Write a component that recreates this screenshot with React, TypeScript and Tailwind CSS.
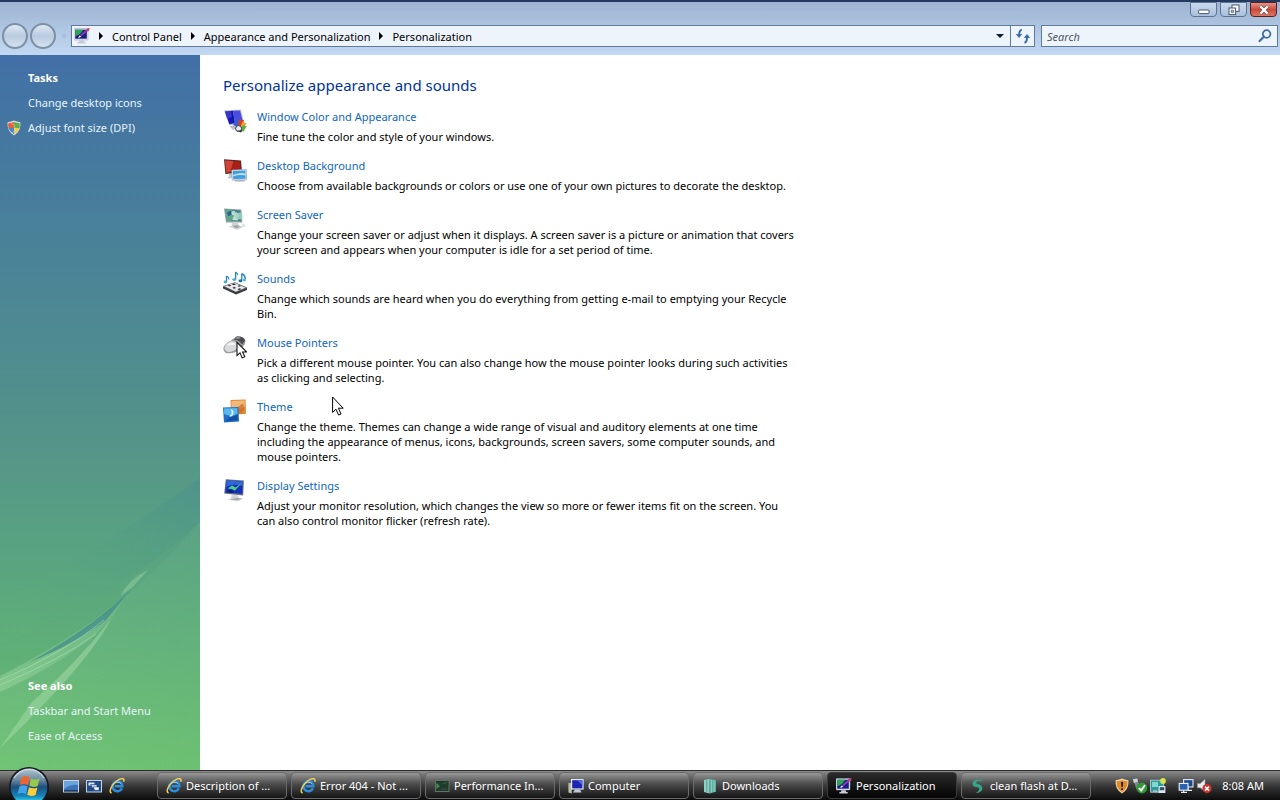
import React, { useState } from "react";

/* ── Icons ── */

function MonitorIcon({ className = "" }: { className?: string }) {
  return (
    <svg viewBox="0 0 16 16" className={className} aria-hidden="true">
      <rect x="0" y="0.5" width="14" height="11.5" rx="0.8" fill="#e6ebf2" stroke="#8f9bb0" strokeWidth="0.5" />
      <rect x="1.2" y="1.7" width="11.6" height="9" fill="#1d1c86" />
      <path d="M1.2 1.7H9.4L6 6 1.2 8.6Z" fill="#2fa452" />
      <path d="M5 9.5 7 6 13.5 0.6 15.4 0.3 14.8 2.2 8.4 7.6Z" fill="#7a3fb5" />
      <path d="M12.4 1.2 15.6 0 15 2.8 13.6 3.6Z" fill="#e0405a" />
      <path d="M4.2 10 5.2 7.4 7.4 8.8Z" fill="#fff" />
      <path d="M5.5 12.2h4l.8 1.8h1.4v1.6H3.4V14h1.4Z" fill="#c6cbd6" />
    </svg>
  );
}

function WindowColorIcon() {
  return (
    <svg viewBox="0 0 24 24" className="h-6 w-6" aria-hidden="true">
      <path d="M1 1.4 18 .6l3 13-14.6 3Z" fill="#b9c2e2" />
      <path d="M2 2.4l8-.6L12 14l-5.6 1.2Z" fill="#1717b4" />
      <path d="M10 1.8 17 1.4l2.8 11.2L12 14Z" fill="#4a4de0" />
      <path d="M2 2.4l6-.5 1 6-5 2Z" fill="#4444cf" opacity="0.7" />
      <path d="M6.5 17.5 12 16l2 4-4 .8Z" fill="#b9bcc6" />
      <path d="M10 15.5 14 9l4.5 1.6-4 8Z" fill="#3a5fd8" />
      <path d="M14.5 18.6 16 10.6 21 11l-2.5 7Z" fill="#d43b2a" />
      <path d="M17 18.8 19.6 12.4 23.4 14.6l-3.8 6Z" fill="#f0a028" />
      <path d="M16 21.5 20 16.4l3.8.6-3.4 5.6Z" fill="#54b040" />
      <circle cx="15.6" cy="19.6" r="3" fill="#eceef2" stroke="#333848" strokeWidth="1" />
      <path d="M14 21.6 18 23.6 19.4 21.4Z" fill="#2a2c36" />
    </svg>
  );
}

function DesktopBackgroundIcon() {
  return (
    <svg viewBox="0 0 24 24" className="h-6 w-6" aria-hidden="true">
      <path d="M1 1.2 18 2.4l1 12L2.4 16Z" fill="#5a2524" />
      <path d="M2 2.4 17 3.4l.8 10L3.2 14.6Z" fill="#a91e17" />
      <path d="M2 2.4 10.4 3l-3.2 11.3-4 .3Z" fill="#cc4435" />
      <path d="M6 16 9 15.7l.6 2.3 2 .6-5 2.1-2.6-1.2 2-.8Z" fill="#c3c6cc" />
      <path d="M8.6 12 23.4 11.3 23.6 21.8 9.2 22Z" fill="#e2eaf2" stroke="#6f87a5" strokeWidth="0.5" />
      <path d="M9.8 13.1 22.4 12.5l.2 8.2-12.4.2Z" fill="#3d9ddd" />
      <path d="M10 17q6.6-3 12.5-1.6v2q-6.6-1-12.4 1Z" fill="#b8e2f6" />
      <path d="M11 22h10l1.4 1.4h-10Z" fill="#aab3bf" />
    </svg>
  );
}

function ScreenSaverIcon() {
  return (
    <svg viewBox="0 0 24 24" className="h-6 w-6" aria-hidden="true">
      <path d="M1 1.4 18.4 2.6l1 13L3 15.4Z" fill="#8fa3a4" />
      <path d="M2.2 2.6 17.2 3.6l.8 10.6L4 13.8Z" fill="#3f7f8c" />
      <path d="M2.2 2.6 9 3.2l3 5-4 5.8-4-.2Z" fill="#5ea98c" />
      <path d="M4 5.5 8 3.8l1 3.4-3.6 2Z" fill="#2d5c94" />
      <path d="M9 13 13 5l3.6 3-2 5.6Z" fill="#bfe3cd" />
      <circle cx="16" cy="9" r="3.6" fill="#9fd4c4" opacity="0.85" />
      <circle cx="10.5" cy="6" r="2.2" fill="#d2ede4" opacity="0.8" />
      <path d="M8.5 15.4h6l1.6 3 4.6 1.4L14 22.8 5.6 19.6l3.4-1Z" fill="#cdd2d2" />
      <path d="M9.4 18.8 14.5 18.2l2.6 1.6-4 1.4Z" fill="#9da5a6" />
      <circle cx="20.6" cy="18.4" r="1.8" fill="#cfe6d8" opacity="0.8" />
    </svg>
  );
}

function SoundsIcon() {
  return (
    <svg viewBox="0 0 24 24" className="h-6 w-6" aria-hidden="true">
      <path d="M0 15.4 12 11.4 24 16.8V19L13 23.6 0 17.6Z" fill="#3a3b40" />
      <path d="M0.6 15.2 12 11.6 23.4 16.8 12.8 21Z" fill="#e9eaec" stroke="#55565a" strokeWidth="0.6" />
      <path d="M4.4 14.6 6.6 13.9 8.4 14.8 6.4 15.5ZM8.8 13.3 11 12.6l2 1-2.2.7ZM9.4 16.8l2-.7 1.8.9-2.2.8ZM14.4 18.2l2.4-.9 1.6.8-2.3.9ZM14.4 14.9l2-.7 1.8.9-2.1.7Z" fill="#26272b" />
      <path d="M3.5 5v6M12.6 1v7.4M18.8 2.4V9.6M18.8 2.4q3.4 2 3.6 5.6" fill="none" stroke="#2583bd" strokeWidth="1.3" />
      <path d="M3.5 5q2.4 1 2.4 3.4M12.6 1q2 1.4 2.2 3.2" fill="none" stroke="#2583bd" strokeWidth="1.1" />
      <ellipse cx="2.4" cy="11" rx="1.8" ry="1.4" fill="#47a9d8" />
      <ellipse cx="11.2" cy="8.6" rx="1.9" ry="1.4" fill="#47a9d8" />
      <ellipse cx="17.4" cy="9.8" rx="1.9" ry="1.5" fill="#1c6aa6" />
      <ellipse cx="21.4" cy="9" rx="1.5" ry="1.3" fill="#47a9d8" />
    </svg>
  );
}

function MousePointerIcon() {
  return (
    <svg viewBox="0 0 24 24" className="h-6 w-6" aria-hidden="true">
      <path d="M0.4 13Q2 8 8 5.4L13.6 1.2Q21 .8 22.6 6 22 12 14 16.4 6 19.6 2 17.4 0 15.8.4 13Z" fill="#9a9b9d" />
      <path d="M1.4 12.6Q3 8.4 8.4 6q6 .4 8.2 5-3.4 4.6-9.6 6-5.6.2-5.6-4.4Z" fill="#d9dadc" />
      <path d="M3.4 10.6Q5.4 8 9 7.4q3 .6 4 2.2-4 .4-9.6 1Z" fill="#f6f6f7" />
      <path d="M11 4.4 14 1.6q6.2-.4 8.2 3.6l-3 4.4Q16.6 5 11 4.4Z" fill="#4b4c50" />
      <path d="M12 2.6 16 1.2l1.6 2-3.2 1Z" fill="#8e9094" />
      <path d="M14 7.4V20.6L17 17.9l2.2 5 2.6-1.1-2.2-4.8h4.2Z" fill="#fff" stroke="#111" strokeWidth="1.1" />
    </svg>
  );
}

function ThemeIcon() {
  return (
    <svg viewBox="0 0 24 24" className="h-6 w-6" aria-hidden="true">
      <path d="M7.5 1 22.6.6l.4 14.4-15 .6Z" fill="#e08a3c" />
      <path d="M8.4 2 21.6 1.6l.2 6.6Q14 12 8.6 9Z" fill="#f3b878" />
      <path d="M12 14.6Q14 7 20 4.6l1.6 4.8-3 5Z" fill="#c96a20" opacity="0.7" />
      <path d="M0 8.4 15.4 8l.6 14.4L1 23.4Z" fill="#1f6fc6" />
      <path d="M1 9.4 14.4 9l.2 5.8Q8 18.6 1.2 15Z" fill="#58b8f0" />
      <path d="M3 21.6Q6 20.4 7.4 17q3.6 1.8 7.2-1.8l.2 6-12.6 1Z" fill="#1450a4" />
      <path d="M7.8 10.6 9 10.4q2.4 1.6 1 5.4-.6 2-3 2-1-.6 0-1.6l1.4-.4q1-3-.6-5.2Z" fill="#e6f7ff" />
    </svg>
  );
}

function DisplaySettingsIcon() {
  return (
    <svg viewBox="0 0 24 24" className="h-6 w-6" aria-hidden="true">
      <path d="M2.8 1.2 20.8 2.4 20.2 17.4 1.2 15.6Z" fill="#5d6b85" />
      <path d="M3.8 2.4 19.6 3.4l-.4 12.4L2.4 14.4Z" fill="#1430b8" />
      <path d="M3.8 2.4 19.6 3.4 19.4 8Q10 5 3 9Z" fill="#2f67da" />
      <path d="M4.6 10.6 9 7.4l3.6 2L18.6 5 12 12.6 8.6 11Z" fill="#4bd08a" />
      <path d="M2.8 14.2 8 11.4l3 3.6Z" fill="#0c1b78" />
      <path d="M8.6 17h6l.8 2.4 4.8 1.4-6 2.6-9.4-1.8 3.4-1.6Z" fill="#d3d5d9" />
      <path d="M7 21.4 14.2 22.2 19 20.8 14 19.8Z" fill="#a6a9b0" />
    </svg>
  );
}

function ShieldIcon() {
  return (
    <svg viewBox="0 0 16 16" className="h-4 w-4" aria-hidden="true">
      <path d="M8 .6Q10.6 2 14.4 2.2 15.4 11 8 15.4 .6 11 1.6 2.2 5.4 2 8 .6Z" fill="#d7dde0" />
      <path d="M8 2 7.9 8H2.4Q1.9 5.6 2.4 3.1 5.6 3 8 2Z" fill="#e2603a" />
      <path d="M8 2Q10.4 3 13.6 3.1q.4 2.4 0 4.9H8Z" fill="#5fae4c" />
      <path d="M2.4 8H8v6.2Q3.6 11.6 2.4 8Z" fill="#4c86c8" />
      <path d="M8 8h5.6Q12.4 11.6 8 14.2Z" fill="#f1cb43" />
      <path d="M5 3.4Q9 4 9 8t-3 5" fill="none" stroke="#fff" strokeWidth="1" opacity="0.35" />
    </svg>
  );
}

function ExplorerIcon() {
  return (
    <svg viewBox="0 0 16 16" className="h-4 w-4 shrink-0" aria-hidden="true">
      <path d="M12.9 10.4A5 5 0 1 1 13.4 8.2H5.6" fill="none" stroke="#2b8fe0" strokeWidth="2.5" />
      <path d="M4.2 6.6A5 5 0 0 1 12 5.6" fill="none" stroke="#8dd0fa" strokeWidth="1" />
      <path d="M2.6 15Q-.6 14 3.4 7.4 8.6 1 13.2.6q2.6.2 1.4 3.2" fill="none" stroke="#f0d25a" strokeWidth="1.5" />
    </svg>
  );
}

function StartOrb() {
  return (
    <svg viewBox="0 0 40 33" className="h-[33px] w-10" aria-hidden="true">
      <defs>
        <linearGradient id="orb" x1="0" y1="0" x2="0" y2="1">
          <stop offset="0" stopColor="#b4c3cf" />
          <stop offset="0.3" stopColor="#6d8ba5" />
          <stop offset="0.5" stopColor="#1f4d7c" />
          <stop offset="0.75" stopColor="#1487bb" />
          <stop offset="0.9" stopColor="#42d6ee" />
        </linearGradient>
      </defs>
      <circle cx="20" cy="20" r="20" fill="#15181c" />
      <circle cx="20" cy="20" r="18.4" fill="url(#orb)" />
      <path d="M5 11Q10.6 2.6 20 2.4t15 8.6" fill="none" stroke="#dfe9f0" strokeWidth="1.2" opacity="0.7" />
      <path d="M12.4 10.4q4.4-2.6 8.4.2l-1.8 7.6q-4-2.4-8.2-.2Z" fill="#ed6430" />
      <path d="M22 11.4q4 2 8.6 0l-1.9 7.6q-4.4 2-8.4-.2Z" fill="#97c94a" />
      <path d="M10.4 19.4q4.2-2.2 8.3.2l-1.9 7.6q-4-2.4-8.2 0Z" fill="#43a3ea" />
      <path d="M20 20.2q4.2 2.2 8.4.2l-1.8 7.6q-4.4 2-8.4-.2Z" fill="#fbce3c" />
    </svg>
  );
}

function ShowDesktopIcon() {
  return (
    <svg viewBox="0 0 16 16" className="h-4 w-4" aria-hidden="true">
      <rect x="0.5" y="2.5" width="15" height="11.5" fill="#3a74b8" stroke="#c4d6ea" />
      <path d="M1 3h14v4Q8 6 1 11Z" fill="#6ba4dc" />
      <path d="M1 12h14v1.6H1Z" fill="#233a5c" />
    </svg>
  );
}

function SwitchWindowsIcon() {
  return (
    <svg viewBox="0 0 16 16" className="h-4 w-4" aria-hidden="true">
      <rect x="0.5" y="2.5" width="15" height="11.5" fill="#234a86" stroke="#c4d6ea" />
      <rect x="2.5" y="4.5" width="6" height="3" fill="#e9f1fa" />
      <path d="M4.6 6.4H11v3.4H6Z" fill="#b7d0ee" stroke="#1d3e74" strokeWidth="0.7" />
      <path d="M7.4 9H13v3.2H8.6Z" fill="#fff" stroke="#1d3e74" strokeWidth="0.5" />
    </svg>
  );
}

function PerformanceIcon() {
  return (
    <svg viewBox="0 0 16 16" className="h-4 w-4 shrink-0" aria-hidden="true">
      <rect x="1.5" y="2.5" width="13.5" height="11" fill="#1f3a2a" stroke="#5d7466" />
      <path d="M2.4 5 6 8 2.4 11Z" fill="#4a8a5e" />
      <path d="M7 11h6M8 6l5-1.6" stroke="#33593f" strokeWidth="1.2" />
    </svg>
  );
}

function ComputerIcon() {
  return (
    <svg viewBox="0 0 16 16" className="h-4 w-4 shrink-0" aria-hidden="true">
      <path d="M0.4 5h3.4v10.4L.4 14.4Z" fill="#b8bfa4" />
      <rect x="3" y="1" width="12.6" height="10.6" fill="#e1e8f4" />
      <rect x="4.2" y="2.2" width="10.2" height="8.2" fill="#1b25b0" />
      <path d="M9 2.2h5.4v5Z" fill="#5068e4" />
      <path d="M7 11.6h5l1.6 3H5Z" fill="#c3c9d4" />
    </svg>
  );
}

function DownloadsIcon() {
  return (
    <svg viewBox="0 0 16 16" className="h-4 w-4 shrink-0" aria-hidden="true">
      <path d="M2 2 7.6.8V15.4L2 14Z" fill="#8fd0c2" />
      <path d="M7.6.8 14 2v11.8l-6.4 1.8Z" fill="#5fb0a2" />
      <path d="M9.4 2v12.4M12 2.4v11.4" stroke="#9ad9cb" strokeWidth="0.8" />
      <path d="M4.8 2.2v11.8" stroke="#4fa497" strokeWidth="1" />
    </svg>
  );
}

function FlashPageIcon() {
  return (
    <svg viewBox="0 0 16 16" className="h-4 w-4 shrink-0" aria-hidden="true">
      <path d="M14 3Q10 .4 5.4 2 1.4 4 3 7.4q1.2 1.6 4 1.6 3 .6 2 3-.8 1.8-3.4 3 5.4-.4 6.6-3.6 1-4-4.4-5.4-2.6-.6-1.4-2.2Q8.6 2 14 3Z" fill="#35a587" />
    </svg>
  );
}

function SecurityTrayIcon() {
  return (
    <svg viewBox="0 0 16 16" className="h-4 w-4" aria-hidden="true">
      <path d="M8 .6Q10.6 2 14.4 2.2 15.4 11 8 15.4 .6 11 1.6 2.2 5.4 2 8 .6Z" fill="#f3d6a8" />
      <path d="M8 2Q10.4 3.2 13.4 3.3 14 10.4 8 14 2 10.4 2.6 3.3 5.6 3.2 8 2Z" fill="#dc8a2c" />
      <path d="M7 4h2.2l-.4 5H7.4ZM7.2 10.2H9v1.8H7.2Z" fill="#2c2017" />
    </svg>
  );
}

function SafeRemoveIcon() {
  return (
    <svg viewBox="0 0 16 16" className="h-4 w-4" aria-hidden="true">
      <path d="M1 1 5.4.6 6 4.2 1.8 5Z" fill="#cfd4da" />
      <path d="M2.4 5 6.6 4.2 8 10 4.4 11Z" fill="#7d8791" />
      <circle cx="9.8" cy="10" r="5.4" fill="#2f9a36" />
      <path d="m7 10 2.2 2.6L13 7" fill="none" stroke="#fff" strokeWidth="1.8" />
    </svg>
  );
}

function DeviceTrayIcon() {
  return (
    <svg viewBox="0 0 16 16" className="h-4 w-4" aria-hidden="true">
      <rect x="0.6" y="2.2" width="13" height="12" fill="#2c9a98" stroke="#c4dcdc" strokeWidth="0.8" />
      <path d="M2 4h6v5H2Z" fill="#7fd8cf" />
      <rect x="8.6" y="8" width="6.8" height="7" fill="#dce5ea" />
      <rect x="9.8" y="9.2" width="4.4" height="3" fill="#2e4f6e" />
      <path d="M3 12.4h4.4v1.4H3Z" fill="#c2ccd2" />
      <circle cx="13" cy="3" r="2.9" fill="#d7e34a" />
    </svg>
  );
}

function NetworkTrayIcon() {
  return (
    <svg viewBox="0 0 16 16" className="h-4 w-4" aria-hidden="true">
      <rect x="5.6" y="1.6" width="9.4" height="7.4" fill="#1f4b8e" stroke="#dfe8f4" strokeWidth="1.1" />
      <path d="M10 9v3.4h4" fill="none" stroke="#dfe8f4" strokeWidth="1.1" />
      <rect x="1.2" y="5.4" width="8.8" height="6.8" fill="#2a62b0" stroke="#f0f5fb" strokeWidth="1.1" />
      <path d="M3 14.4h6M5.6 12.2v2" stroke="#dfe8f4" strokeWidth="1.2" />
    </svg>
  );
}

function VolumeTrayIcon() {
  return (
    <svg viewBox="0 0 16 16" className="h-4 w-4" aria-hidden="true">
      <path d="M1.4 5.6h2.8L9 1.2v12.4L4.2 9.8H1.4Z" fill="#e9ebee" stroke="#8d9197" strokeWidth="0.5" />
      <circle cx="11" cy="10.6" r="4.6" fill="#d0302a" />
      <path d="m9 8.6 4 4M13 8.6l-4 4" stroke="#fff" strokeWidth="1.5" />
    </svg>
  );
}

function RefreshIcon() {
  return (
    <svg viewBox="0 0 16 16" className="h-4 w-4" aria-hidden="true">
      <path d="M6.8 1.6Q4.2 2.4 4.1 7" fill="none" stroke="#3a6ea8" strokeWidth="2" />
      <path d="M.8 6h6.4L4.1 10Z" fill="#3a6ea8" />
      <path d="M9.4 14.8q2.6-1 2.6-5.4" fill="none" stroke="#3a6ea8" strokeWidth="2" />
      <path d="M8.8 10h6.4L12 6Z" fill="#3a6ea8" />
    </svg>
  );
}

function SearchIcon() {
  return (
    <svg viewBox="0 0 16 16" className="h-4 w-4" aria-hidden="true">
      <circle cx="9.6" cy="6" r="3.8" fill="#eaf3fc" stroke="#3f6da3" strokeWidth="1.8" />
      <path d="M6.8 8.8 2.6 13" stroke="#3f6da3" strokeWidth="2.2" strokeLinecap="round" />
    </svg>
  );
}

/* ── Data ── */

const CRUMBS = ["Control Panel", "Appearance and Personalization", "Personalization"];

const SETTINGS = [
  {
    title: "Window Color and Appearance",
    text: "Fine tune the color and style of your windows.",
    icon: <WindowColorIcon />,
  },
  {
    title: "Desktop Background",
    text: "Choose from available backgrounds or colors or use one of your own pictures to decorate the desktop.",
    icon: <DesktopBackgroundIcon />,
  },
  {
    title: "Screen Saver",
    text: "Change your screen saver or adjust when it displays. A screen saver is a picture or animation that covers your screen and appears when your computer is idle for a set period of time.",
    icon: <ScreenSaverIcon />,
  },
  {
    title: "Sounds",
    text: "Change which sounds are heard when you do everything from getting e-mail to emptying your Recycle Bin.",
    icon: <SoundsIcon />,
  },
  {
    title: "Mouse Pointers",
    text: "Pick a different mouse pointer. You can also change how the mouse pointer looks during such activities as clicking and selecting.",
    icon: <MousePointerIcon />,
  },
  {
    title: "Theme",
    text: "Change the theme. Themes can change a wide range of visual and auditory elements at one time including the appearance of menus, icons, backgrounds, screen savers, some computer sounds, and mouse pointers.",
    icon: <ThemeIcon />,
  },
  {
    title: "Display Settings",
    text: "Adjust your monitor resolution, which changes the view so more or fewer items fit on the screen. You can also control monitor flicker (refresh rate).",
    icon: <DisplaySettingsIcon />,
  },
];

const WINDOWS = [
  { label: "Description of ...", icon: <ExplorerIcon /> },
  { label: "Error 404 - Not ...", icon: <ExplorerIcon /> },
  { label: "Performance In...", icon: <PerformanceIcon /> },
  { label: "Computer", icon: <ComputerIcon /> },
  { label: "Downloads", icon: <DownloadsIcon /> },
  { label: "Personalization", icon: <MonitorIcon className="h-4 w-4 shrink-0" />, active: true },
  { label: "clean flash at D...", icon: <FlashPageIcon /> },
];

/* ── Window frame ── */

function CaptionButtons() {
  const base = "flex h-[15px] w-[27px] items-center justify-center rounded-b-sm border";
  return (
    <div className="flex justify-end gap-[3px] pr-[3px]">
      <button aria-label="Minimize" className={`${base} border-[#5c7596] bg-linear-to-b from-[#c9d9ec] to-[#a9c0dc]`}>
        <svg viewBox="0 0 12 10" className="h-[10px] w-3" aria-hidden="true">
          <rect x="0.6" y="5" width="10.4" height="3.6" rx="0.6" fill="#fff" stroke="#44566e" />
        </svg>
      </button>
      <button aria-label="Restore" className={`${base} border-[#5c7596] bg-linear-to-b from-[#c9d9ec] to-[#a9c0dc]`}>
        <svg viewBox="0 0 12 12" className="h-3 w-3" aria-hidden="true">
          <rect x="4" y="1" width="7" height="6.4" fill="#fff" stroke="#44566e" />
          <rect x="1" y="4" width="6.6" height="6.6" fill="#fff" stroke="#44566e" />
          <rect x="3.2" y="6.2" width="2.2" height="2.2" fill="#b5c8df" stroke="#44566e" strokeWidth="0.7" />
        </svg>
      </button>
      <button aria-label="Close" className={`${base} border-[#5a1f22] bg-linear-to-b from-[#e0968c] via-[#c94a3c] to-[#dc7565]`}>
        <svg viewBox="0 0 12 10" className="h-[10px] w-3" aria-hidden="true">
          <path d="m2.4 1.4 7.2 7.2M9.6 1.4 2.4 8.6" stroke="#6b3a3a" strokeWidth="3.6" />
          <path d="m2.4 1.4 7.2 7.2M9.6 1.4 2.4 8.6" stroke="#fff" strokeWidth="2.3" />
        </svg>
      </button>
    </div>
  );
}

function NavButtons() {
  return (
    <div className="flex w-[71px] shrink-0 items-center pl-[2px]">
      {["Back", "Forward"].map((label) => (
        <button
          key={label}
          aria-label={label}
          className="mr-[2px] h-[26px] w-[26px] shrink-0 rounded-full border-2 border-[#7c8fa5] bg-linear-to-b from-[#dfe9f4] via-[#b9cbdf] to-[#d5e2ef]"
        />
      ))}
      <span className="ml-1 h-1 w-1 rounded-full border border-[#9db6d3]" />
    </div>
  );
}

function Crumb({ label }: { label: string }) {
  return (
    <>
      <svg viewBox="0 0 4 8" className="h-2 w-1 shrink-0" aria-hidden="true">
        <path d="M0 0 4 4 0 8Z" fill="#000" />
      </svg>
      <a href="#" className="whitespace-nowrap">{label}</a>
    </>
  );
}

function AddressBar() {
  const [query, setQuery] = useState("");

  return (
    <div className="flex items-center pb-[6px]">
      <NavButtons />
      <div className="flex h-[22px] flex-1 border border-[#5e7b9c] bg-[#eef4fc]">
        <nav aria-label="Breadcrumb" className="flex flex-1 items-center gap-[9px] pl-[2px]">
          <MonitorIcon className="h-4 w-4 shrink-0" />
          {CRUMBS.map((label) => (
            <Crumb key={label} label={label} />
          ))}
        </nav>
        <button aria-label="Previous locations" className="flex w-5 items-center justify-center">
          <svg viewBox="0 0 8 4" className="h-1 w-2" aria-hidden="true">
            <path d="M0 0H8L4 4Z" fill="#0b1a33" />
          </svg>
        </button>
        <button aria-label="Refresh" className="flex w-6 items-center justify-center border-l border-[#5e7b9c]">
          <RefreshIcon />
        </button>
      </div>
      <form
        onSubmit={(e) => e.preventDefault()}
        className="ml-[6px] mr-[2px] flex h-[22px] w-[237px] items-center border border-[#5e7b9c] bg-[#eef4fc] pl-[5px] pr-1"
      >
        <input
          type="search"
          aria-label="Search"
          placeholder="Search"
          value={query}
          onChange={(e) => setQuery(e.target.value)}
          className="min-w-0 flex-1 bg-transparent outline-none placeholder:italic placeholder:text-[#4f5560]"
        />
        <button aria-label="Start search">
          <SearchIcon />
        </button>
      </form>
    </div>
  );
}

function Sidebar() {
  return (
    <aside className="relative flex w-[200px] shrink-0 flex-col justify-between bg-linear-to-b from-[#426fa6] via-[#52918b] to-[#66be6a] pb-6 pl-7 pt-[13px] text-[#e8f4fb]">
      <svg viewBox="0 0 200 340" className="pointer-events-none absolute bottom-0 left-0 h-[340px] w-full" aria-hidden="true">
        <defs>
          <linearGradient id="ray" x1="0" y1="1" x2="1" y2="0">
            <stop offset="0" stopColor="#5fb577" stopOpacity="0.1" />
            <stop offset="1" stopColor="#4a8e8c" stopOpacity="0.55" />
          </linearGradient>
          <linearGradient id="glow" x1="0" y1="1" x2="1" y2="0">
            <stop offset="0" stopColor="#a6dda6" stopOpacity="0.45" />
            <stop offset="1" stopColor="#8fd09a" stopOpacity="0.15" />
          </linearGradient>
        </defs>
        <path d="M0 170Q60 144 110 108 160 78 200 48V92Q150 138 80 178 40 200 0 214Z" fill="url(#ray)" />
        <path d="M0 252Q110 196 200 92V340H0Z" fill="url(#glow)" opacity="0.4" />
        <path d="M0 246Q90 200 132 158L112 188Q78 226 0 262Z" fill="url(#glow)" />
        <path d="M30 232Q98 194 134 156L106 190Q78 212 30 232Z" fill="#3f8a8d" opacity="0.7" />
        <path d="M112 188Q86 236 0 318L32 272Q74 236 112 188Z" fill="#a5dca8" opacity="0.5" />
        <path d="M0 250Q66 222 104 190M0 255Q60 230 96 204" fill="none" stroke="#b9e6bf" strokeWidth="0.7" opacity="0.7" />
        <path d="M120 166Q130 148 148 140L132 158Z" fill="#96d0a4" opacity="0.5" />
      </svg>
      <nav aria-label="Tasks" className="relative flex flex-col gap-[5px] leading-5">
        <h2 className="font-bold text-white">Tasks</h2>
        <a href="#">Change desktop icons</a>
        <a href="#" className="-ml-[22px] flex items-center gap-[6px]">
          <ShieldIcon />
          Adjust font size (DPI)
        </a>
      </nav>
      <nav aria-label="See also" className="relative flex flex-col gap-[5px] leading-5">
        <h2 className="font-bold text-white">See also</h2>
        <a href="#">Taskbar and Start Menu</a>
        <a href="#">Ease of Access</a>
      </nav>
    </aside>
  );
}

function Taskbar() {
  return (
    <footer className="relative flex h-[30px] shrink-0 items-stretch border-t border-[#2c2c2c] bg-linear-to-b from-[#8b8b8b] via-[#3a3a3a] via-50% to-[#0c0c0c] text-white">
      <div className="flex w-[157px] shrink-0 items-center pl-[9px]">
        <button aria-label="Start" className="self-end">
          <StartOrb />
        </button>
        <div className="ml-[14px] flex gap-[7px]">
          <button aria-label="Show desktop"><ShowDesktopIcon /></button>
          <button aria-label="Switch between windows"><SwitchWindowsIcon /></button>
          <button aria-label="Internet Explorer"><ExplorerIcon /></button>
        </div>
      </div>
      <div className="flex min-w-0 flex-1 gap-1 pb-px pt-px">
        {WINDOWS.map((w) => (
          <button
            key={w.label}
            className={`flex min-w-0 max-w-[130px] flex-1 items-center gap-1 whitespace-nowrap rounded-sm border pl-2 ${
              w.active
                ? "border-[#3d3d3d] bg-linear-to-b from-[#2b2b2b] to-[#050505]"
                : "border-[#6b6b6b] bg-linear-to-b from-[#999999] via-[#4b4b4b] via-45% to-[#161616]"
            }`}
          >
            {w.icon}
            {w.label}
          </button>
        ))}
      </div>
      <div className="flex shrink-0 items-center gap-[2px] pr-4">
        <SecurityTrayIcon />
        <SafeRemoveIcon />
        <DeviceTrayIcon />
        <span className="ml-[10px] flex gap-[2px]">
          <NetworkTrayIcon />
          <VolumeTrayIcon />
        </span>
        <time className="ml-2">8:08 AM</time>
      </div>
    </footer>
  );
}

export default function App() {
  return (
    <div className="relative flex min-h-screen flex-col bg-white font-['Noto_Sans','Open_Sans',sans-serif] text-[11px] leading-[15px] text-black">
      <header className="flex flex-col gap-[6px] border-t-2 border-[#233a5e] bg-linear-to-b from-[#9cb4d2] to-[#c3d8f2]">
        <CaptionButtons />
        <AddressBar />
      </header>

      <div className="flex flex-1">
        <Sidebar />
        <main className="flex-1 pl-[23px] pt-5">
          <h1 className="mb-[11px] text-[15px] leading-[21px] text-[#003399]">Personalize appearance and sounds</h1>
          <ul className="flex max-w-[574px] flex-col gap-3">
            {SETTINGS.map((item) => (
              <li key={item.title} className="flex gap-[10px]">
                <span className="mt-[2px] h-6 w-6 shrink-0">{item.icon}</span>
                <div>
                  <a href="#" className="mb-[2px] block leading-5 text-[#0f66bd]">{item.title}</a>
                  <p>{item.text}</p>
                </div>
              </li>
            ))}
          </ul>
        </main>
      </div>

      <Taskbar />

      <svg viewBox="0 0 12 20" className="pointer-events-none absolute left-[332px] top-[396px] h-5 w-3" aria-hidden="true">
        <path d="M.6 1V16.4L4 13.2 6.6 19 9 18 6.4 12.2H11.2Z" fill="#fff" stroke="#000" />
      </svg>
    </div>
  );
}
